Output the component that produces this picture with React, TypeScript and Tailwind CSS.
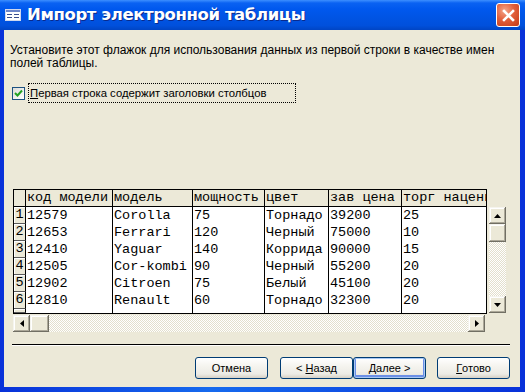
const ui = { fontFamily: '"Liberation Sans", Arial, sans-serif' };
const mono = { fontFamily: '"Liberation Mono", "Courier New", monospace' };

const columns = [
  { title: "код модели", w: "w-[87px]" },
  { title: "модель", w: "w-[80px]" },
  { title: "мощность", w: "w-[72px]" },
  { title: "цвет", w: "w-[64px]" },
  { title: "зав цена", w: "w-[73px]" },
  { title: "торг наценка", w: "w-[84px]" },
];

const rows = [
  ["12579", "Corolla", "75", "Торнадо", "39200", "25"],
  ["12653", "Ferrari", "120", "Черный", "75000", "10"],
  ["12410", "Yaguar", "140", "Коррида", "90000", "15"],
  ["12505", "Cor-kombi", "90", "Черный", "55200", "20"],
  ["12902", "Citroen", "75", "Белый", "45100", "20"],
  ["12810", "Renault", "60", "Торнадо", "32300", "20"],
];

const bevel =
  "bg-[#ece9d8] shadow-[inset_-1px_-1px_#716f64,inset_1px_1px_#f5f4ee,inset_-2px_-2px_#aca899,inset_2px_2px_#ffffff]";
const checker =
  "bg-[repeating-conic-gradient(#ffffff_0%_25%,#e3dfcc_0%_50%)] bg-[length:2px_2px]";

const Arrow = ({ dir }: { dir: "up" | "down" | "left" | "right" }) => {
  const pts = {
    up: "0,4 7,4 3.5,0",
    down: "0,0 7,0 3.5,4",
    left: "4,0 4,7 0,3.5",
    right: "0,0 0,7 4,3.5",
  }[dir];
  const vert = dir === "up" || dir === "down";
  return (
    <svg width={vert ? 7 : 4} height={vert ? 4 : 7} viewBox={vert ? "0 0 7 4" : "0 0 4 7"}>
      <polygon points={pts} fill="#000" />
    </svg>
  );
};

const TitleBar = () => (
  <div className="h-[30px] flex items-center pl-[5px] pr-[5px] bg-[linear-gradient(to_bottom,#3d8fff_0%,#0a62f2_10%,#0058ee_30%,#0054e3_60%,#0050dc_85%,#0045c4_100%)]">
    <svg width="16" height="12" viewBox="0 0 16 12" className="shrink-0">
      <rect x="0.5" y="0.5" width="15" height="11" fill="#fff" stroke="#cfd8ee" />
      <rect x="1" y="1" width="14" height="2" fill="#6d86c9" />
      <line x1="2" y1="5.5" x2="7" y2="5.5" stroke="#3a4f8f" />
      <line x1="9" y1="5.5" x2="14" y2="5.5" stroke="#3a4f8f" />
      <line x1="2" y1="8.5" x2="7" y2="8.5" stroke="#3a4f8f" />
      <line x1="9" y1="8.5" x2="14" y2="8.5" stroke="#3a4f8f" />
    </svg>
    <span
      className="ml-[6px] text-white font-bold text-[16.5px] tracking-[-0.4px] leading-none [text-shadow:1px_1px_#0a2a8c]"
      style={{ fontFamily: '"DejaVu Sans", "Liberation Sans", sans-serif' }}
    >
      Импорт электронной таблицы
    </span>
    <div className="ml-auto w-[24px] h-[24px] rounded-[3px] border border-white bg-[radial-gradient(circle_at_35%_30%,#f4a58a_0%,#e2603c_45%,#c53a15_100%)] flex items-center justify-center">
      <svg width="13" height="13" viewBox="0 0 13 13">
        <path d="M2 2 L11 11 M11 2 L2 11" stroke="#fff" strokeWidth="2.6" strokeLinecap="square" />
      </svg>
    </div>
  </div>
);

const Button = ({ children, def }: { children: React.ReactNode; def?: boolean }) => (
  <div
    className={
      "w-[73px] h-[22px] rounded-[3px] border border-[#003c74] flex items-center justify-center text-[11px] text-black bg-[linear-gradient(to_bottom,#ffffff_0%,#f5f4ef_40%,#ecebe5_80%,#d6d0c5_100%)] " +
      (def ? "shadow-[inset_0_0_0_1px_#a8c8f4,inset_0_-1px_0_2px_#6b8fe6]" : "")
    }
    style={ui}
  >
    {children}
  </div>
);

export default function App() {
  return (
    <div className="w-[525px] h-[392px] flex flex-col bg-[#0a46d8] overflow-hidden" style={ui}>
      <TitleBar />
      <div className="flex-1 flex pl-[4px] pr-[5px] pb-[5px] bg-[linear-gradient(to_right,#0831d9,#166aee_40%,#0831d9)]">
        <div className="flex-1 bg-[#ece9d8] flex flex-col">
          <div className="pt-[14px] pl-[6px] text-[12px] leading-[13px] text-black whitespace-nowrap">
            Установите этот флажок для использования данных из первой строки в качестве имен
            <br />
            полей таблицы.
          </div>

          <div className="mt-[13px] h-[20px] flex items-center pl-[8px]">
            <div className="w-[13px] h-[13px] border border-[#1c5180] bg-[linear-gradient(135deg,#dcdcd7,#ffffff)] flex items-center justify-center">
              <svg width="9" height="9" viewBox="0 0 9 9">
                <path d="M1 4 L3.5 6.5 L8 1.5" stroke="#21a121" strokeWidth="2" fill="none" />
              </svg>
            </div>
            <div className="ml-[3px] w-[268px] h-[20px] border border-dotted border-black flex items-center pl-[1px] text-[11.3px] text-black">
              <span className="underline">П</span>ервая строка содержит заголовки столбцов
            </div>
          </div>

          <div className="mt-[86px] ml-[9px] flex items-start">
            <div className="border border-black bg-white text-[13.5px] text-black" style={mono}>
              <div className="flex h-[17px] border-b border-black bg-[#ece9d8]">
                <div className="w-[12px] border-r border-black" />
                {columns.map((c) => (
                  <div key={c.title} className={c.w + " border-r border-black last:border-r-0 pl-[1px] leading-[16px] overflow-hidden whitespace-nowrap"}>
                    {c.title}
                  </div>
                ))}
              </div>
              {[...rows, null].map((r, i) => (
                <div key={i} className={"flex " + (r ? "h-[17px]" : "h-[4px]")}>
                  <div className="w-[12px] border-r border-black bg-[#ece9d8] border-b border-b-[#5a5a5a] shadow-[inset_1px_1px_#fff] text-center leading-[16px] overflow-hidden">
                    {r ? i + 1 : ""}
                  </div>
                  {columns.map((c, j) => (
                    <div key={j} className={c.w + " border-r border-black last:border-r-0 pl-[1px] leading-[17px] overflow-hidden whitespace-nowrap"}>
                      {r ? r[j] : ""}
                    </div>
                  ))}
                </div>
              ))}
            </div>

            <div className="ml-[2px] mt-[18px] w-[17px] h-[106px] flex flex-col">
              <div className={bevel + " h-[17px] flex items-center justify-center"}>
                <Arrow dir="up" />
              </div>
              <div className={bevel + " h-[18px]"} />
              <div className={"flex-1 " + checker} />
              <div className={bevel + " h-[17px] flex items-center justify-center"}>
                <Arrow dir="down" />
              </div>
            </div>
          </div>

          <div className="mt-[1px] ml-[9px] w-[472px] h-[17px] flex">
            <div className={bevel + " w-[17px] flex items-center justify-center"}>
              <Arrow dir="left" />
            </div>
            <div className={bevel + " w-[19px]"} />
            <div className={"flex-1 " + checker} />
            <div className={bevel + " w-[17px] flex items-center justify-center"}>
              <Arrow dir="right" />
            </div>
          </div>

          <div className="mt-[12px] ml-[8px] w-[498px] border-t border-black border-b border-b-white" />

          <div className="mt-[11px] flex pl-[191px]">
            <Button>Отмена</Button>
            <div className="ml-[12px] flex">
              <Button>
                &lt;&nbsp;<span className="underline">Н</span>азад
              </Button>
              <Button def>
                <span className="underline">Д</span>алее&nbsp;&gt;
              </Button>
            </div>
            <div className="ml-[11px]">
              <Button>
                <span className="underline">Г</span>отово
              </Button>
            </div>
          </div>
        </div>
      </div>
    </div>
  );
}
